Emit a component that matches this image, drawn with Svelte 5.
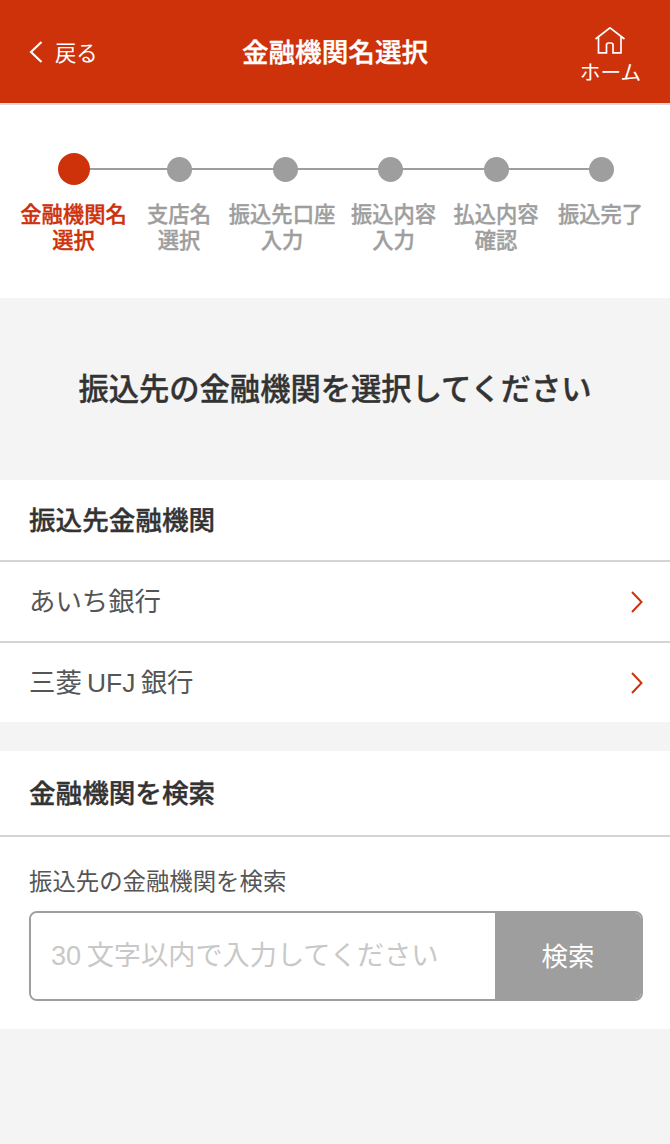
<script>
	const steps = [
		{ label: ['金融機関名', '選択'], active: true },
		{ label: ['支店名', '選択'] },
		{ label: ['振込先口座', '入力'] },
		{ label: ['振込内容', '入力'] },
		{ label: ['払込内容', '確認'] },
		{ label: ['振込完了'] }
	];

	// thin spaces: the reference sets a small gap between latin and kanji
	const banks = ['あいち銀行', '三菱\u2009UFJ\u2009銀行'];
</script>

<div class="page">
	<header class="topbar">
		<a class="back" href="#back">
			<svg width="14" height="22" viewBox="0 0 14 22" fill="none" stroke="#fff" stroke-width="2.2">
				<path d="M12.5 1 L2 11 L12.5 21" />
			</svg>
			<span>戻る</span>
		</a>
		<h1>金融機関名選択</h1>
		<a class="home" href="#home">
			<svg width="30" height="27" viewBox="0 0 30 27" fill="none" stroke="#fff" stroke-width="1.7">
				<path d="M0.5 12 L15 0.8 L29.5 12 M3.5 9.5 V25.8 H11.5 V18 Q11.5 16 13.5 16 H16 Q18 16 18 18 V25.8 H26 V9.5" />
			</svg>
			<span>ホーム</span>
		</a>
	</header>

	<section class="stepper">
		<div class="dots">
			{#each steps as step}
				<div class="dot-cell">
					<span class="dot" class:active={step.active}></span>
				</div>
			{/each}
		</div>
		<ol class="labels">
			{#each steps as step}
				<li class:active={step.active}>
					{#each step.label as line}
						<span>{line}</span>
					{/each}
				</li>
			{/each}
		</ol>
	</section>

	<h2 class="lead">振込先の金融機関を選択してください</h2>

	<section class="card">
		<h3>振込先金融機関</h3>
		{#each banks as bank}
			<a class="bank" href="#bank">
				<span>{bank}</span>
				<svg width="12" height="22" viewBox="0 0 12 22" fill="none" stroke="#cd320a" stroke-width="2">
					<path d="M1 1 L10.5 11 L1 21" />
				</svg>
			</a>
		{/each}
	</section>

	<section class="card search">
		<h3>金融機関を検索</h3>
		<div class="search-body">
			<label for="bank-name">振込先の金融機関を検索</label>
			<div class="search-row">
				<input id="bank-name" type="text" placeholder={'30\u2009文字以内で入力してください'} />
				<button type="button">検索</button>
			</div>
		</div>
	</section>
</div>

<style>
	:global(body) {
		margin: 0;
		background: #f4f4f4;
	}

	.page {
		height: 1144px;
		overflow: hidden;
		background: #f4f4f4;
		color: #333;
		font-family: "Liberation Sans", "Noto Sans CJK JP", sans-serif;
	}

	a {
		color: inherit;
		text-decoration: none;
	}

	.topbar {
		display: grid;
		grid-template-columns: 1fr auto 1fr;
		align-items: center;
		height: 103px;
		padding: 0 29px;
		background: #cd320a;
		border-bottom: 2px solid #d9d9d9;
		color: #fff;
	}

	/* medium plus a hairline stroke sits between the installed weights */
	.topbar h1,
	.labels,
	.lead,
	.card h3 {
		font-weight: 500;
		-webkit-text-stroke: 0.35px currentColor;
	}

	.topbar h1 {
		margin: 0;
		padding-top: 4px;
		font-size: 26.6px;
		line-height: 1;
	}

	.back {
		display: flex;
		align-items: center;
		gap: 12px;
		font-size: 21.3px;
		font-weight: 400;
	}

	.home {
		justify-self: end;
		display: flex;
		flex-direction: column;
		align-items: center;
		gap: 6px;
		padding-top: 10px;
		font-size: 20.6px;
		font-weight: 400;
		line-height: 26px;
	}

	.stepper {
		height: 193px;
		background: #fff;
		overflow: hidden;
	}

	.dots {
		display: flex;
		justify-content: space-between;
		height: 32px;
		margin: 48px 52px 0 58px;
		background: linear-gradient(#9e9e9e, #9e9e9e) left center / calc(100% - 16px) 2px no-repeat;
	}

	.dot-cell {
		display: flex;
		justify-content: center;
		align-items: center;
		width: 32px;
	}

	.dot {
		width: 25px;
		height: 25px;
		border-radius: 50%;
		background: #9e9e9e;
	}

	.dot.active {
		width: 32px;
		height: 32px;
		background: #cd320a;
	}

	.labels {
		display: grid;
		grid-template-columns: 105px 106px 100px 123px 82px 127px;
		margin: 17px 0 0 21px;
		padding: 0;
		list-style: none;
		color: #9e9e9e;
		font-size: 21.3px;
		line-height: 26px;
	}

	.labels li {
		display: flex;
		flex-direction: column;
		align-items: center;
		white-space: nowrap;
	}

	.labels li.active {
		color: #cd320a;
	}

	.lead {
		display: flex;
		justify-content: center;
		align-items: center;
		height: 178px;
		margin: 0;
		padding-bottom: 4px;
		font-size: 30.3px;
	}

	.card {
		background: #fff;
		margin-bottom: 29px;
	}

	.card h3 {
		display: flex;
		align-items: center;
		height: 76px;
		margin: 0;
		padding: 0 29px 4px;
		border-bottom: 2px solid #d4d4d4;
		font-size: 26.6px;
	}

	.search h3 {
		height: 80px;
	}

	.bank {
		display: flex;
		justify-content: space-between;
		align-items: center;
		height: 79px;
		padding: 0 27px 0 29px;
		color: #555;
		font-size: 26.4px;
		font-weight: 400;
	}

	.bank span {
		padding-bottom: 5px;
	}

	.bank + .bank {
		border-top: 2px solid #d4d4d4;
	}

	.search-body {
		padding: 30px 27px 28px 29px;
	}

	label {
		display: block;
		color: #555;
		font-size: 23.4px;
		line-height: 30px;
	}

	.search-row {
		display: flex;
		height: 90px;
		margin-top: 14px;
		border: 2px solid #9e9e9e;
		border-radius: 8px;
		box-sizing: border-box;
		overflow: hidden;
	}

	input {
		flex: 1;
		min-width: 0;
		padding: 0 20px;
		border: 0;
		outline: 0;
		background: #fff;
		font: inherit;
		font-size: 27.2px;
	}

	input::placeholder {
		color: #c8c8c8;
		opacity: 1;
	}

	button {
		width: 146px;
		padding: 0 0 4px;
		border: 0;
		background: #9e9e9e;
		color: #fff;
		font: inherit;
		font-size: 26.4px;
	}
</style>
